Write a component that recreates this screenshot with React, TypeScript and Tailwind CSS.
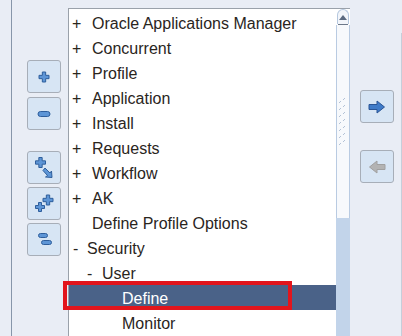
import React from "react";

const Btn = ({ children, className = "" }: { children: React.ReactNode; className?: string }) => (
  <div
    className={`w-[34px] h-[33px] rounded-[3px] border border-[#a7aeb8] bg-[#d7e5f4] flex items-center justify-center ${className}`}
  >
    {children}
  </div>
);

const Plus = ({ x, y, s = 10 }: { x: number; y: number; s?: number }) => {
  const t = s / 3;
  const a = (s - t) / 2;
  const d = `M${x + a} ${y} h${t} v${a} h${a} v${t} h${-a} v${a} h${-t} v${-a} h${-a} v${-t} h${a} Z`;
  return <path d={d} fill="#5d95d6" stroke="#2e5e9c" strokeWidth="1" strokeLinejoin="round" />;
};

const Pill = ({ x, y, w = 12, h = 5 }: { x: number; y: number; w?: number; h?: number }) => (
  <rect x={x} y={y} width={w} height={h} rx={h / 2} fill="#5d95d6" stroke="#2e5e9c" strokeWidth="1" />
);

type Row = { pre?: string; preX: number; textX: number; text: string; sel?: boolean };

const rows: Row[] = [
  { pre: "+", preX: 3, textX: 23, text: "Oracle Applications Manager" },
  { pre: "+", preX: 3, textX: 23, text: "Concurrent" },
  { pre: "+", preX: 3, textX: 23, text: "Profile" },
  { pre: "+", preX: 3, textX: 23, text: "Application" },
  { pre: "+", preX: 3, textX: 23, text: "Install" },
  { pre: "+", preX: 3, textX: 23, text: "Requests" },
  { pre: "+", preX: 3, textX: 23, text: "Workflow" },
  { pre: "+", preX: 3, textX: 23, text: "AK" },
  { preX: 3, textX: 23, text: "Define Profile Options" },
  { pre: "-", preX: 4, textX: 18, text: "Security" },
  { pre: "-", preX: 18, textX: 33, text: "User" },
  { preX: 3, textX: 53, text: "Define", sel: true },
  { preX: 3, textX: 53, text: "Monitor" },
];

export default function App() {
  return (
    <div
      className="relative w-[402px] h-[336px] overflow-hidden bg-[#e9edf5] flex"
      style={{ fontFamily: '"Liberation Sans", Arial, sans-serif' }}
    >
      {/* left divider */}
      <div className="ml-[11px] w-px h-full bg-[#8796aa]" />

      {/* left button column */}
      <div className="ml-[15px] pt-[60px] flex flex-col w-[34px]">
        <Btn>
          <svg width="14" height="14" viewBox="0 0 14 14">
            <Plus x={2} y={2} s={10} />
          </svg>
        </Btn>
        <Btn className="mt-[4px]">
          <svg width="16" height="10" viewBox="0 0 16 10">
            <Pill x={2} y={2.5} w={12} h={5} />
          </svg>
        </Btn>
        <Btn className="mt-[21px]">
          <svg width="24" height="26" viewBox="0 0 24 26">
            <Plus x={3.5} y={2.5} s={10} />
            <path d="M13 13 L18 18 L19.5 16 L20 22.5 L13.5 22 L15.5 20.5 L11 15.5 Z" fill="#5d95d6" stroke="#2e5e9c" strokeWidth="1" strokeLinejoin="round" />
          </svg>
        </Btn>
        <Btn className="mt-[3px]">
          <svg width="24" height="24" viewBox="0 0 24 24">
            <Plus x={11} y={3} s={10} />
            <Plus x={3.5} y={10.5} s={9} />
          </svg>
        </Btn>
        <Btn className="mt-[3px]">
          <svg width="22" height="18" viewBox="0 0 22 18">
            <Pill x={5.5} y={2.5} w={9} h={4} />
            <Pill x={8.5} y={9.5} w={10} h={4} />
          </svg>
        </Btn>
      </div>

      {/* list box */}
      <div className="ml-[7px] mt-[8px] w-[282px] flex border-t border-l border-[#9aa1aa] bg-white">
        <div className="w-[267px] pt-[1px] flex flex-col">
          {rows.map((r, i) => (
            <div
              key={i}
              className={`relative h-[25px] leading-[25px] text-[16px] whitespace-nowrap ${
                r.sel ? "bg-[#4a6288] text-white" : "text-[#2a251d]"
              }`}
            >
              {r.pre && (
                <span className="absolute top-[1px]" style={{ left: r.preX }}>
                  {r.pre}
                </span>
              )}
              <span className="absolute top-[1px]" style={{ left: r.textX }}>
                {r.text}
              </span>
            </div>
          ))}
        </div>
        {/* scrollbar */}
        <div className="w-[14px] flex flex-col">
          <div className="h-[15px] mx-[1px] rounded-t-[6px] border border-b-0 border-[#b5c7de] bg-[#f2f5fa] flex items-center justify-center">
            <svg width="8" height="5" viewBox="0 0 8 5">
              <path d="M0 5 L4 0 L8 5 Z" fill="#5b6a80" />
            </svg>
          </div>
          <div className="h-px mx-[2px] bg-[#6c7889]" />
          <div className="h-[193px] border-x border-[#b9cbe2] bg-[#f7f9fc] flex flex-col items-center justify-center">
            <svg width="8" height="50" viewBox="0 0 8 50">
              {[0, 1, 2, 3, 4, 5, 6].map((k) => (
                <g key={k} fill="#b3c2d6">
                  <rect x="5" y={k * 7 + 1} width="1" height="1" />
                  <rect x="4" y={k * 7 + 2} width="1" height="1" />
                  <rect x="1" y={k * 7 + 4} width="1" height="1" />
                  <rect x="0" y={k * 7 + 5} width="1" height="1" />
                </g>
              ))}
            </svg>
          </div>
          <div className="flex-1 bg-[#c2d4ea]" />
        </div>
      </div>

      {/* right button column */}
      <div className="ml-[10px] pt-[90px] flex flex-col w-[34px]">
        <Btn>
          <svg width="18" height="14" viewBox="0 0 18 14">
            <path d="M1 4.5 H9 V1 L16.5 7 L9 13 V9.5 H1 Z" fill="#3f7bc8" stroke="#2a5595" strokeWidth="1" strokeLinejoin="round" />
          </svg>
        </Btn>
        <Btn className="mt-[27px]">
          <svg width="18" height="14" viewBox="0 0 18 14">
            <path d="M17 4.5 H9 V1 L1.5 7 L9 13 V9.5 H17 Z" fill="#b3b3b3" stroke="#a0a0a0" strokeWidth="1" strokeLinejoin="round" />
          </svg>
        </Btn>
      </div>

      {/* right edge */}
      <div className="absolute right-0 top-[33px] bottom-0 w-px bg-[#c6ceda]" />

      {/* red highlight box */}
      <div className="absolute left-[63px] top-[281px] w-[229px] h-[29px] border-4 border-[#e2151c]" />
    </div>
  );
}
